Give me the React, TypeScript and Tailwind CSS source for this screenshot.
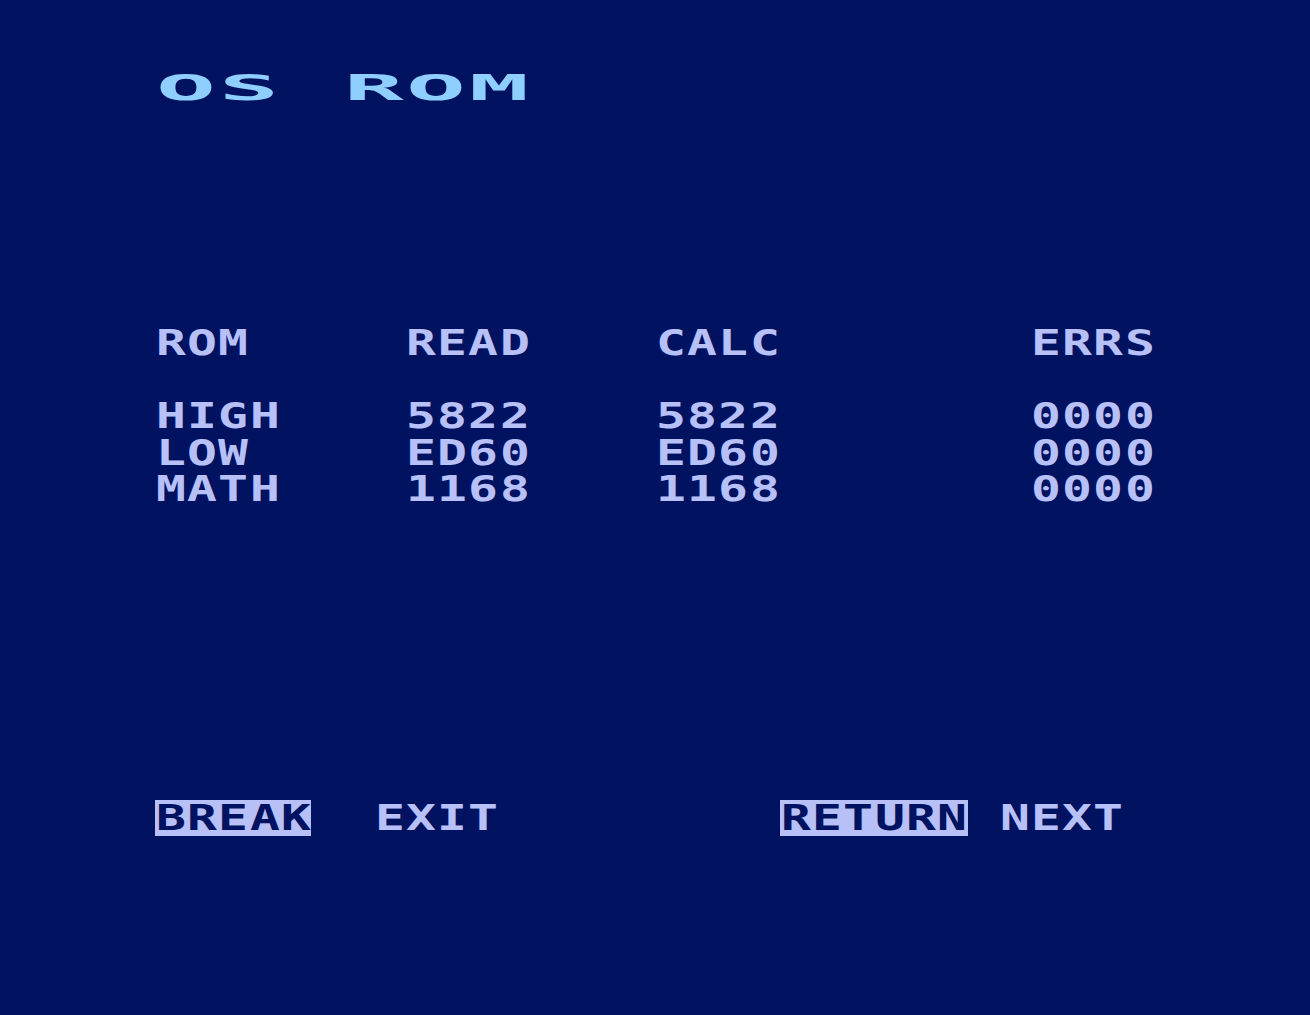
import { Fragment } from 'react';

// 40-column character screen: every glyph sits in its own fixed cell.
type Row = {
  text: string;
  wide?: boolean;
  inverse?: [number, number][];
};

const BLANK: Row = { text: '' };

const SCREEN: Row[] = [
  { text: 'OS ROM', wide: true },
  BLANK,
  BLANK,
  BLANK,
  BLANK,
  BLANK,
  BLANK,
  { text: 'ROM     READ    CALC        ERRS' },
  BLANK,
  { text: 'HIGH    5822    5822        0000' },
  { text: 'LOW     ED60    ED60        0000' },
  { text: 'MATH    1168    1168        0000' },
  BLANK,
  BLANK,
  BLANK,
  BLANK,
  BLANK,
  BLANK,
  BLANK,
  BLANK,
  {
    text: 'BREAK  EXIT         RETURN NEXT',
    inverse: [
      [0, 5],
      [20, 26],
    ],
  },
];

function isInverse(row: Row, col: number) {
  return (row.inverse ?? []).some(([from, to]) => col >= from && col < to);
}

function Cell({ ch, wide, inverse }: { ch: string; wide?: boolean; inverse: boolean }) {
  return (
    <span
      className={`flex h-[36.5px] justify-center ${wide ? 'w-[62.5px]' : 'w-[31.25px]'} ${
        inverse ? 'bg-[#b8c0f8] text-[#001260]' : ''
      }`}
    >
      {ch === ' ' ? null : (
        <span className={`inline-block ${wide ? 'scale-x-[2.76]' : 'scale-x-[1.38]'}`}>{ch}</span>
      )}
    </span>
  );
}

export default function App() {
  return (
    <div className="h-screen w-full overflow-hidden bg-[#001260] pl-[155px] pt-[69.5px] font-['DejaVu_Sans_Mono','Liberation_Mono',monospace] text-[36px] font-bold leading-[36.5px] text-[#b8c0f8]">
      {SCREEN.map((row, r) => (
        <div key={r} className={`flex h-[36.5px] ${row.wide ? 'text-[#8ecfff]' : ''}`}>
          {row.text.split('').map((ch, c) => (
            <Fragment key={c}>
              <Cell ch={ch} wide={row.wide} inverse={isInverse(row, c)} />
            </Fragment>
          ))}
        </div>
      ))}
    </div>
  );
}
